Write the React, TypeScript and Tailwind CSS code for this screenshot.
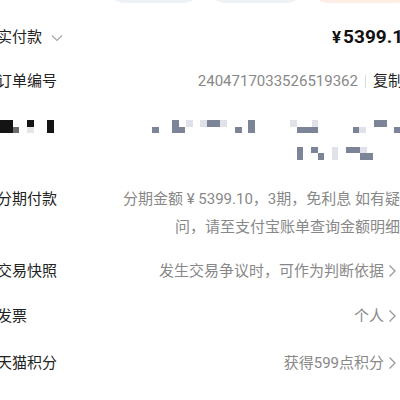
const font = { fontFamily: "Roboto, 'Noto Sans CJK SC', sans-serif" };

type Block = [number, number, number, number, string];

const dark = "#141414";
const gray = "#7c8598";
const light = "#dfe2e8";

// 打码区域的马赛克块 (x, y, w, h, 颜色)，y 相对于容器顶部
const blocks: Block[] = [
  [0, 18, 13, 13, dark],
  [13, 25, 6, 6, "#6b6b6b"],
  [27, 18, 7, 7, dark],
  [27, 25, 7, 6, "#e6e6e6"],
  [47, 18, 7, 13, dark],
  [152, 25, 7, 6, gray],
  [172, 18, 7, 13, gray],
  [179, 25, 6, 6, gray],
  [186, 18, 7, 7, light],
  [200, 18, 7, 7, light],
  [207, 18, 13, 7, gray],
  [220, 18, 7, 7, light],
  [235, 25, 7, 6, gray],
  [248, 18, 7, 13, gray],
  [290, 18, 7, 7, light],
  [297, 25, 21, 6, gray],
  [312, 18, 6, 7, light],
  [353, 25, 6, 6, gray],
  [359, 25, 7, 6, light],
  [374, 18, 13, 7, gray],
  [394, 25, 6, 6, gray],
  [297, 45, 6, 13, gray],
  [311, 45, 7, 6, gray],
  [318, 51, 6, 7, gray],
  [332, 45, 6, 13, light],
  [346, 45, 14, 6, gray],
  [360, 45, 7, 6, light],
  [360, 51, 13, 7, gray],
];

function Chevron() {
  return (
    <svg width="9" height="14" viewBox="0 0 9 14" className="ml-[4px] shrink-0">
      <polyline points="1.5,1.5 7,7 1.5,12.5" fill="none" stroke="#9a9a9a" strokeWidth="1.3" />
    </svg>
  );
}

function Row({ label, height, children }: { label: string; height: string; children: React.ReactNode }) {
  return (
    <div className={`flex items-center justify-between ${height}`}>
      <span className="text-[15px] text-[#222] whitespace-nowrap">{label}</span>
      {children}
    </div>
  );
}

export default function App() {
  return (
    <div className="w-[400px] h-[400px] overflow-hidden bg-white" style={font}>
      {/* 顶部按钮底边 */}
      <div className="flex gap-[9px] pl-[108px] -mt-[30px] h-[33px]">
        <div className="w-[92px] h-[33px] rounded-full bg-[#eef2f7] shrink-0" />
        <div className="w-[94px] h-[33px] rounded-full bg-[#eef2f7] shrink-0" />
        <div className="w-[100px] h-[33px] rounded-full bg-[#fdefe5] shrink-0" />
      </div>

      <div className="w-[415px] -ml-[3px] mt-[11px]">
        <div className="flex items-center justify-between h-[46px] -mr-[2px]">
          <div className="flex items-center">
            <span className="text-[15px] text-[#222]">实付款</span>
            <svg width="12" height="8" viewBox="0 0 12 8" className="ml-[9px] mt-[1px]">
              <polyline points="1,1.5 6,6.5 11,1.5" fill="none" stroke="#a8a8a8" strokeWidth="1.2" />
            </svg>
          </div>
          <span className="text-[19px] font-bold text-[#111] whitespace-nowrap">
            <span className="text-[17px] mr-[2px]">¥</span>5399.10
          </span>
        </div>

        <div className="flex items-center justify-between h-[42px] pr-[9px]">
          <span className="text-[15px] text-[#222]">订单编号</span>
          <div className="flex items-center whitespace-nowrap">
            <span className="text-[15px] text-[#888]">2404717033526519362</span>
            <span className="w-px h-[13px] bg-[#dcdcdc] mx-[7px]" />
            <span className="text-[15px] text-[#222]">复制</span>
          </div>
        </div>

        <svg width="415" height="70" className="block">
          {blocks.map(([x, y, w, h, c], i) => (
            <rect key={i} x={x + 3} y={y} width={w} height={h} fill={c} />
          ))}
        </svg>

        <div className="flex justify-between pt-[13px] pb-[7px] pr-[12px]">
          <span className="text-[15px] leading-[28px] text-[#222] whitespace-nowrap">分期付款</span>
          <div className="text-right text-[15px] leading-[28px] text-[#888] whitespace-nowrap">
            <div>分期金额 ¥ 5399.10，3期，免利息 如有疑</div>
            <div>问，请至支付宝账单查询金额明细</div>
          </div>
        </div>

        <Row label="交易快照" height="h-[46px] pr-[15px]">
          <div className="flex items-center">
            <span className="text-[15px] text-[#888] whitespace-nowrap">发生交易争议时，可作为判断依据</span>
            <Chevron />
          </div>
        </Row>

        <Row label="发票" height="h-[44px] pr-[15px]">
          <div className="flex items-center">
            <span className="text-[15px] text-[#888]">个人</span>
            <Chevron />
          </div>
        </Row>

        <Row label="天猫积分" height="h-[50px] pr-[15px]">
          <div className="flex items-center">
            <span className="text-[15px] text-[#888]">获得599点积分</span>
            <Chevron />
          </div>
        </Row>
      </div>
    </div>
  );
}
